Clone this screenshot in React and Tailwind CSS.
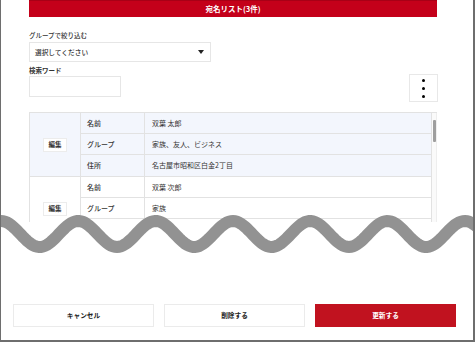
import React from "react";

const P = 77.3;
const buildWave = () => {
  let d = "";
  for (let x = -10; x <= 490; x += 2) {
    const y = 24 - 13 * Math.cos((2 * Math.PI * x) / P);
    d += (x === -10 ? "M" : "L") + x + " " + y.toFixed(2) + " ";
  }
  return d;
};
const WAVE = buildWave();

const FONT = { fontFamily: '"Noto Sans CJK JP", "Noto Sans", sans-serif' };

function Row({ label, value, last }) {
  return (
    <div className={"flex h-[21px] " + (last ? "" : "border-b border-[#e2e2e2]")}>
      <div className="w-[64px] shrink-0 border-r border-[#e2e2e2] flex items-center pl-[6px] text-[7px] font-medium text-[#333]">
        {label}
      </div>
      <div className="flex-1 flex items-center pl-[7px] text-[7px] text-[#333]">{value}</div>
    </div>
  );
}

function Group({ bg, rows }) {
  return (
    <div className={"flex border-b border-[#e2e2e2] " + bg}>
      <div className="w-[51px] shrink-0 border-r border-[#e2e2e2] flex items-center justify-center">
        <div className="w-[24px] h-[14px] bg-white border border-[#ececec] flex items-center justify-center text-[6.5px] font-bold text-[#333]">
          編集
        </div>
      </div>
      <div className="flex-1 flex flex-col">
        {rows.map((r, i) => (
          <Row key={i} label={r[0]} value={r[1]} last={i === rows.length - 1} />
        ))}
      </div>
    </div>
  );
}

export default function App() {
  return (
    <div
      className="relative w-[475px] h-[342px] bg-white border-l border-r-2 border-b-2 border-[#6e6e6e] overflow-hidden"
      style={FONT}
    >
      <div className="pl-[28px]">
        <div className="w-[408px] h-[17px] bg-[#c4001a] border-t border-[#a80016] flex items-center justify-center text-white text-[7.5px] font-bold">
          宛名リスト(3件)
        </div>

        <div className="mt-[13px] h-[10px] leading-[10px] text-[6.5px] font-medium text-[#333]">
          グループで絞り込む
        </div>
        <div className="mt-[2px] w-[182px] h-[20px] border border-[#e6e6e6] flex items-center justify-between pl-[5px] pr-[6px]">
          <span className="text-[6.7px] font-medium text-[#333]">選択してください</span>
          <svg width="6" height="4" viewBox="0 0 6 4">
            <path d="M0 0 L6 0 L3 4 Z" fill="#222" />
          </svg>
        </div>

        <div className="flex w-[409px] justify-between mt-[3px]">
          <div className="flex flex-col">
            <div className="h-[10px] leading-[10px] text-[6.5px] font-bold text-[#333]">検索ワード</div>
            <div className="mt-[1px] w-[92px] h-[21px] border border-[#e6e6e6]" />
          </div>
          <div className="mt-[9px] w-[29px] h-[28px] border border-[#e8e8e8] flex flex-col items-center justify-center gap-[5px]">
            <div className="w-[3px] h-[3px] rounded-full bg-black" />
            <div className="w-[3px] h-[3px] rounded-full bg-black" />
            <div className="w-[3px] h-[3px] rounded-full bg-black" />
          </div>
        </div>

        <div className="mt-[10px] w-[408px] h-[110px] overflow-hidden flex border-t border-l border-[#e2e2e2]">
          <div className="flex-1 flex flex-col border-r border-[#e2e2e2]">
            <Group
              bg="bg-[#f3f6fd]"
              rows={[
                ["名前", "双葉 太郎"],
                ["グループ", "家族、友人、ビジネス"],
                ["住所", "名古屋市昭和区白金2丁目"],
              ]}
            />
            <Group
              bg="bg-white"
              rows={[
                ["名前", "双葉 次郎"],
                ["グループ", "家族"],
                ["", ""],
              ]}
            />
          </div>
          <div className="w-[5px] shrink-0 bg-[#fafafa] border-r border-[#eeeeee] flex flex-col items-center pt-[7px]">
            <div className="w-[3px] h-[22px] rounded-[1px] bg-[#9e9e9e]" />
          </div>
        </div>
      </div>

      <div className="mt-[82px] pl-[12px] flex gap-[10px]">
        <div className="w-[141px] h-[23px] border border-[#ebebeb] flex items-center justify-center text-[6.7px] font-bold text-[#222]">
          キャンセル
        </div>
        <div className="w-[141px] h-[23px] border border-[#ebebeb] flex items-center justify-center text-[6.7px] font-bold text-[#222]">
          削除する
        </div>
        <div className="w-[141px] h-[23px] bg-[#c1121f] flex items-center justify-center text-[6.7px] font-bold text-white">
          更新する
        </div>
      </div>

      <svg
        className="absolute left-0 top-[210px] pointer-events-none"
        width="475"
        height="50"
        viewBox="0 0 475 50"
      >
        <path d={WAVE} fill="none" stroke="#929292" strokeWidth="12" />
      </svg>
    </div>
  );
}
